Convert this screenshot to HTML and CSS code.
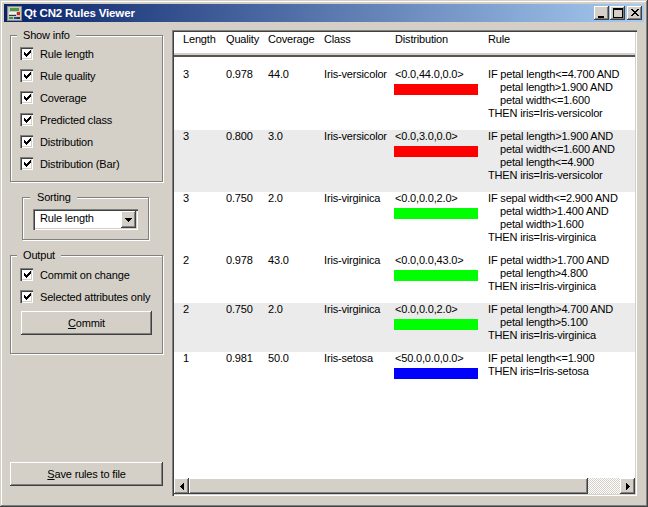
FILE: index.html
```html
<!DOCTYPE html>
<html lang="en">
<head>
<meta charset="utf-8">
<title>Qt CN2 Rules Viewer</title>
<link rel="stylesheet" href="styles.css">
</head>
<body>
<div class="window">
  <header class="titlebar">
    <svg class="appicon" width="15" height="15" viewBox="0 0 15 15" shape-rendering="crispEdges"><rect width="15" height="15" fill="#8a8a86"/><rect x="1" y="1" width="13" height="13" fill="#c8c8c0"/><rect x="3" y="2" width="9" height="3" fill="#4a9a4a"/><rect x="2" y="6" width="7" height="2" fill="#f0f0f0"/><rect x="10" y="6" width="3" height="3" fill="#d82020"/><rect x="2" y="9" width="7" height="1" fill="#333"/><rect x="2" y="11" width="4" height="2" fill="#3a9a3a"/><rect x="7" y="11" width="3" height="2" fill="#2040c0"/><rect x="10" y="11" width="3" height="2" fill="#333"/></svg>
    <span class="title">Qt CN2 Rules Viewer</span>
    <div class="winbtns">
      <button class="winbtn"><svg width="15" height="14" viewBox="0 0 15 14"><rect x="4" y="10" width="6" height="2" fill="#000"/></svg></button>
      <button class="winbtn"><svg width="15" height="14" viewBox="0 0 15 14" shape-rendering="crispEdges"><path d="M3 2h9v9H3z M3 3h9" fill="none" stroke="#000"/></svg></button>
      <button class="winbtn closebtn"><svg width="15" height="14" viewBox="0 0 15 14" shape-rendering="crispEdges"><path d="M4 3h2v1h-2z M5 4h2v1h-2z M6 5h2v1h-2z M7 6h2v1h-2z M6 7h2v1h-2z M5 8h2v1h-2z M4 9h2v1h-2z M10 3h2v1h-2z M9 4h2v1h-2z M8 5h2v1h-2z M8 7h2v1h-2z M9 8h2v1h-2z M10 9h2v1h-2z" fill="#000"/></svg></button>
    </div>
  </header>
  <div class="content">
    <aside class="sidebar">
      <section class="group showinfo">
        <span class="legend">Show info</span>
        <label class="check"><span class="box"><svg width="7" height="7" viewBox="0 0 7 7" shape-rendering="crispEdges"><path d="M0 2h1v3H0z M1 3h1v3H1z M2 4h1v3H2z M3 3h1v3H3z M4 2h1v3H4z M5 1h1v3H5z M6 0h1v3H6z" fill="#000"/></svg></span>Rule length</label>
        <label class="check"><span class="box"><svg width="7" height="7" viewBox="0 0 7 7" shape-rendering="crispEdges"><path d="M0 2h1v3H0z M1 3h1v3H1z M2 4h1v3H2z M3 3h1v3H3z M4 2h1v3H4z M5 1h1v3H5z M6 0h1v3H6z" fill="#000"/></svg></span>Rule quality</label>
        <label class="check"><span class="box"><svg width="7" height="7" viewBox="0 0 7 7" shape-rendering="crispEdges"><path d="M0 2h1v3H0z M1 3h1v3H1z M2 4h1v3H2z M3 3h1v3H3z M4 2h1v3H4z M5 1h1v3H5z M6 0h1v3H6z" fill="#000"/></svg></span>Coverage</label>
        <label class="check"><span class="box"><svg width="7" height="7" viewBox="0 0 7 7" shape-rendering="crispEdges"><path d="M0 2h1v3H0z M1 3h1v3H1z M2 4h1v3H2z M3 3h1v3H3z M4 2h1v3H4z M5 1h1v3H5z M6 0h1v3H6z" fill="#000"/></svg></span>Predicted class</label>
        <label class="check"><span class="box"><svg width="7" height="7" viewBox="0 0 7 7" shape-rendering="crispEdges"><path d="M0 2h1v3H0z M1 3h1v3H1z M2 4h1v3H2z M3 3h1v3H3z M4 2h1v3H4z M5 1h1v3H5z M6 0h1v3H6z" fill="#000"/></svg></span>Distribution</label>
        <label class="check"><span class="box"><svg width="7" height="7" viewBox="0 0 7 7" shape-rendering="crispEdges"><path d="M0 2h1v3H0z M1 3h1v3H1z M2 4h1v3H2z M3 3h1v3H3z M4 2h1v3H4z M5 1h1v3H5z M6 0h1v3H6z" fill="#000"/></svg></span>Distribution (Bar)</label>
      </section>
      <section class="group sorting">
        <span class="legend">Sorting</span>
        <div class="combo">
          <span class="combotext">Rule length</span>
          <span class="comboarrow"><svg width="7" height="4" viewBox="0 0 7 4" shape-rendering="crispEdges"><path d="M0 0h7v1H0z M1 1h5v1H1z M2 2h3v1H2z M3 3h1v1H3z" fill="#000"/></svg></span>
        </div>
      </section>
      <section class="group output">
        <span class="legend">Output</span>
        <label class="check"><span class="box"><svg width="7" height="7" viewBox="0 0 7 7" shape-rendering="crispEdges"><path d="M0 2h1v3H0z M1 3h1v3H1z M2 4h1v3H2z M3 3h1v3H3z M4 2h1v3H4z M5 1h1v3H5z M6 0h1v3H6z" fill="#000"/></svg></span>Commit on change</label>
        <label class="check"><span class="box"><svg width="7" height="7" viewBox="0 0 7 7" shape-rendering="crispEdges"><path d="M0 2h1v3H0z M1 3h1v3H1z M2 4h1v3H2z M3 3h1v3H3z M4 2h1v3H4z M5 1h1v3H5z M6 0h1v3H6z" fill="#000"/></svg></span>Selected attributes only</label>
        <button class="btn commit"><u>C</u>ommit</button>
      </section>
      <button class="btn save"><u>S</u>ave rules to file</button>
    </aside>
    <main class="frame">
      <div class="cols head">
        <span>Length</span><span>Quality</span><span>Coverage</span><span>Class</span><span>Distribution</span><span>Rule</span>
      </div>
      <div class="list">
        <div class="cols row">
          <span>3</span><span>0.978</span><span>44.0</span><span>Iris-versicolor</span>
          <div><div>&lt;0.0,44.0,0.0&gt;</div><div class="bar red"></div></div>
          <div>IF petal length&lt;=4.700 AND<div class="ind">petal length&gt;1.900 AND</div><div class="ind">petal width&lt;=1.600</div>THEN iris=Iris-versicolor</div>
        </div>
        <div class="cols row alt">
          <span>3</span><span>0.800</span><span>3.0</span><span>Iris-versicolor</span>
          <div><div>&lt;0.0,3.0,0.0&gt;</div><div class="bar red"></div></div>
          <div>IF petal length&gt;1.900 AND<div class="ind">petal width&lt;=1.600 AND</div><div class="ind">petal length&lt;=4.900</div>THEN iris=Iris-versicolor</div>
        </div>
        <div class="cols row">
          <span>3</span><span>0.750</span><span>2.0</span><span>Iris-virginica</span>
          <div><div>&lt;0.0,0.0,2.0&gt;</div><div class="bar green"></div></div>
          <div>IF sepal width&lt;=2.900 AND<div class="ind">petal width&gt;1.400 AND</div><div class="ind">petal width&gt;1.600</div>THEN iris=Iris-virginica</div>
        </div>
        <div class="cols row">
          <span>2</span><span>0.978</span><span>43.0</span><span>Iris-virginica</span>
          <div><div>&lt;0.0,0.0,43.0&gt;</div><div class="bar green"></div></div>
          <div>IF petal width&gt;1.700 AND<div class="ind">petal length&gt;4.800</div>THEN iris=Iris-virginica</div>
        </div>
        <div class="cols row alt">
          <span>2</span><span>0.750</span><span>2.0</span><span>Iris-virginica</span>
          <div><div>&lt;0.0,0.0,2.0&gt;</div><div class="bar green"></div></div>
          <div>IF petal length&gt;4.700 AND<div class="ind">petal length&gt;5.100</div>THEN iris=Iris-virginica</div>
        </div>
        <div class="cols row">
          <span>1</span><span>0.981</span><span>50.0</span><span>Iris-setosa</span>
          <div><div>&lt;50.0,0.0,0.0&gt;</div><div class="bar blue"></div></div>
          <div>IF petal length&lt;=1.900<div>THEN iris=Iris-setosa</div></div>
        </div>
      </div>
      <div class="hscroll">
        <span class="sbtn"><svg width="4" height="7" viewBox="0 0 4 7" shape-rendering="crispEdges"><path d="M3 0h1v7H3z M2 1h1v5H2z M1 2h1v3H1z M0 3h1v1H0z" fill="#000"/></svg></span>
        <span class="thumb"></span>
        <span class="track"></span>
        <span class="sbtn"><svg width="4" height="7" viewBox="0 0 4 7" shape-rendering="crispEdges"><path d="M0 0h1v7H0z M1 1h1v5H1z M2 2h1v3H2z M3 3h1v1H3z" fill="#000"/></svg></span>
      </div>
    </main>
  </div>
</div>
</body>
</html>
```
FILE: styles.css
```css
* { box-sizing: border-box; }
html, body { margin: 0; padding: 0; }
body { font: 11px/13px "Liberation Sans", Arial, sans-serif; letter-spacing: -0.17px; color: #000; background: #d4d0c8; }
.window {
  width: 648px; height: 507px; padding: 4px; display: flex; flex-direction: column;
  background: #d4d0c8;
  box-shadow: inset -1px -1px 0 #404040, inset 1px 1px 0 #d4d0c8, inset -2px -2px 0 #808080, inset 2px 2px 0 #fff;
}
.titlebar {
  height: 18px; display: flex; align-items: center; padding: 0 2px 0 3px; flex: none;
  background: linear-gradient(to right, #0a246a, #a6caf0);
}
.appicon { flex: none; }
.title { margin-left: 2px; color: #fff; font-weight: bold; font-size: 11.5px; letter-spacing: -0.15px; }
.winbtns { margin-left: auto; display: flex; }
.winbtn {
  width: 15px; height: 14px; padding: 0; border: 0; background: #d4d0c8; display: block;
  box-shadow: inset -1px -1px 0 #404040, inset 1px 1px 0 #fff, inset -2px -2px 0 #808080;
}
.winbtn svg { display: block; }
.winbtn + .winbtn { margin-left: 1px; }
.closebtn.winbtn { margin-left: 2px; }
.content { flex: 1; display: flex; min-height: 0; }
.sidebar { width: 168px; flex: none; display: flex; flex-direction: column; padding: 13px 0 17px 6px; }
.group {
  display: flex; flex-direction: column; width: 153px;
  border: 1px solid #808080;
  box-shadow: 1px 1px 0 #fff, inset 1px 1px 0 #fff;
  padding: 0 0 0 9px;
}
.legend {
  align-self: flex-start; margin: -7px 0 0 -3px; padding: 0 6px; background: #d4d0c8;
  height: 13px;
}
.showinfo { height: 147px; }
.check { display: flex; height: 22px; padding-top: 4px; gap: 7px; flex: none; line-height: 15px; }
.check:first-of-type { margin-top: 1px; }
.box {
  width: 13px; height: 13px; flex: none; background: #fff; display: flex; align-items: center; justify-content: center;
  box-shadow: inset 1px 1px 0 #808080, inset 2px 2px 0 #404040, inset -1px -1px 0 #fff, inset -2px -2px 0 #d4d0c8;
}
.box svg { display: block; margin: 0 0 0 1px; }
.sorting { width: 127px; height: 43px; margin: 15px 0 0 12px; padding-left: 10px; }
.sorting .legend { padding-left: 7px; }
.combo {
  width: 105px; height: 21px; margin-top: 5px; padding: 2px; display: flex; background: #fff;
  box-shadow: inset 1px 1px 0 #808080, inset 2px 2px 0 #404040, inset -1px -1px 0 #fff, inset -2px -2px 0 #d4d0c8;
}
.combotext { flex: 1; padding: 1px 0 0 5px; }
.comboarrow {
  width: 15px; height: 17px; background: #d4d0c8; display: flex; align-items: center; justify-content: center;
  box-shadow: inset -1px -1px 0 #404040, inset 1px 1px 0 #fff, inset -2px -2px 0 #808080;
}
.comboarrow svg { display: block; }
.output { height: 99px; margin-top: 15px; }
.output .check:first-of-type { margin-top: 2px; }
.btn {
  font: inherit; letter-spacing: inherit; color: #000; border: 0; padding: 1px 0 0; background: #d4d0c8; height: 24px; display: block;
  box-shadow: inset -1px -1px 0 #404040, inset 1px 1px 0 #fff, inset -2px -2px 0 #808080;
}
.commit { width: 131px; margin: 3px 0 0 1px; }
.save { width: 153px; margin-top: auto; }
.frame {
  margin: 8px 0 7px 0; width: 465px; padding: 2px; display: flex; flex-direction: column; background: #fff;
  box-shadow: inset 1px 1px 0 #808080, inset 2px 2px 0 #404040, inset -1px -1px 0 #fff, inset -2px -2px 0 #d4d0c8;
}
.cols { display: grid; grid-template-columns: 43px 42px 56px 71px 93px 1fr; padding-left: 9px; }
.head { height: 23px; padding-top: 1px; flex: none; border-bottom: 2px solid #d4d0c8; }
.list { flex: 1; padding-top: 11px; border-top: 2px solid #555; overflow: hidden; }
.row { padding-bottom: 10px; }
.alt { background: #ebebeb; }
.ind { padding-left: 12px; }
.bar { width: 84px; height: 11px; margin: 3px 0 0 -1px; }
.red { background: #ff0000; }
.green { background: #00ff00; }
.blue { background: #0000ff; }
.hscroll { flex: none; height: 16px; display: flex; }
.sbtn {
  width: 15px; flex: none; background: #d4d0c8; display: flex; align-items: center; justify-content: center;
  box-shadow: inset -1px -1px 0 #404040, inset 1px 1px 0 #fff, inset -2px -2px 0 #808080;
}
.thumb {
  width: 399px; flex: none; background: #d4d0c8;
  box-shadow: inset -1px -1px 0 #404040, inset 1px 1px 0 #fff, inset -2px -2px 0 #808080;
}
.track { flex: 1; background: conic-gradient(#fff 25%, #d4d0c8 0 50%, #fff 0 75%, #d4d0c8 0) 0 0 / 2px 2px; }
```
